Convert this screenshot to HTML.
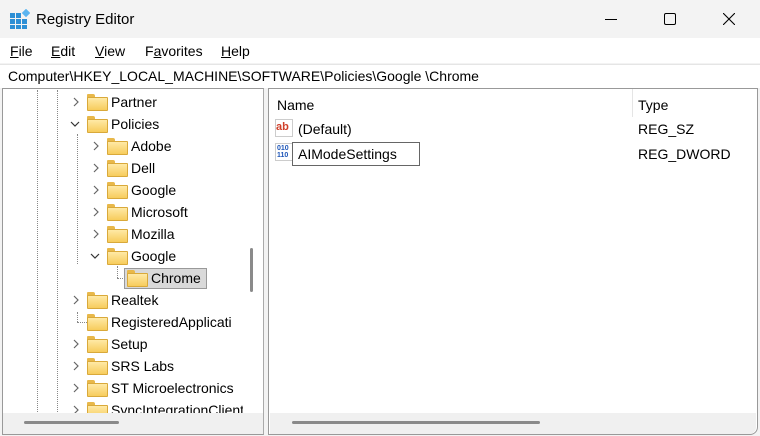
<!DOCTYPE html>
<html><head><style>
*{margin:0;padding:0;box-sizing:border-box}
body{width:760px;height:436px;overflow:hidden;background:#f3f3f3;font-family:"Liberation Sans",sans-serif;font-size:14px;color:#000;position:relative}
.a{position:absolute;white-space:nowrap}
.t{line-height:18px}
.fold{position:absolute;width:19px;height:15px;z-index:2}
.fold:before{content:"";position:absolute;left:0;top:0;width:8px;height:4px;background:#e8b84a;border-radius:1px 2px 0 0}
.fold:after{content:"";position:absolute;left:0;top:3px;width:19px;height:12px;background:linear-gradient(#ffe9a6,#f7cc5c);border:1px solid #d9a93a;border-radius:1px}
.dv{position:absolute;width:0;border-left:1px dotted #888}
.dh{position:absolute;height:0;border-top:1px dotted #888}
.chev{position:absolute;width:12px;height:12px}
</style></head><body>
<div class="a" style="left:0;top:0;width:760px;height:38px;background:#f3f3f3"></div>
<svg class="a" style="left:10px;top:9px" width="20" height="20" viewBox="0 0 20 20">
<g fill="#2d8fd5"><rect x="0" y="4" width="5" height="5"/><rect x="6" y="4" width="5" height="5"/><rect x="0" y="10" width="5" height="5"/><rect x="6" y="10" width="5" height="5"/><rect x="12" y="10" width="5" height="5"/><rect x="0" y="16" width="5" height="4"/><rect x="6" y="16" width="5" height="4"/><rect x="12" y="16" width="5" height="4"/></g>
<rect x="13" y="1" width="6" height="6" fill="#5ab4f0" transform="rotate(45 16 4)"/></svg>
<div class="a t" style="left:36px;top:11px;font-size:15px">Registry Editor</div>
<div class="a" style="left:605px;top:19px;width:12px;height:1px;background:#000"></div>
<div class="a" style="left:664px;top:13px;width:12px;height:12px;border:1px solid #000;border-radius:2px"></div>
<svg class="a" style="left:723px;top:13px" width="12" height="12"><path d="M0 0L12 12M12 0L0 12" stroke="#000" stroke-width="1.1"/></svg>
<div class="a" style="left:0;top:38px;width:760px;height:25px;background:#fff"></div>
<div class="a t" style="left:10px;top:42px"><u>F</u>ile</div>
<div class="a t" style="left:51px;top:42px"><u>E</u>dit</div>
<div class="a t" style="left:95px;top:42px"><u>V</u>iew</div>
<div class="a t" style="left:145px;top:42px">F<u>a</u>vorites</div>
<div class="a t" style="left:221px;top:42px"><u>H</u>elp</div>
<div class="a" style="left:0;top:64px;width:760px;height:24px;background:#fff;border-top:1px solid #e5e5e5"></div>
<div class="a t" style="left:8px;top:67px">Computer\HKEY_LOCAL_MACHINE\SOFTWARE\Policies\Google \Chrome</div>
<div class="a" style="left:2px;top:88px;width:262px;height:347px;background:#fff;border:1px solid #999;border-right:1px solid #aaa"></div>
<div class="dv" style="left:37px;top:90px;height:322px"></div>
<div class="dv" style="left:57px;top:90px;height:322px"></div>
<div class="dv" style="left:77px;top:134px;height:130px"></div>
<div class="dv" style="left:117px;top:266px;height:12px"></div>
<div class="dh" style="left:117px;top:278px;width:10px"></div>
<div class="dh" style="left:77px;top:322px;width:10px"></div>
<div class="dv" style="left:77px;top:312px;height:10px"></div>
<div class="a" style="left:124px;top:268px;width:83px;height:21px;background:#d9d9d9;border:1px solid #999"></div>
<div id="tree"></div>
<script>
var rows=[["Partner",0,">"],["Policies",0,"v"],["Adobe",1,">"],["Dell",1,">"],["Google",1,">"],["Microsoft",1,">"],["Mozilla",1,">"],["Google",1,"v"],["Chrome",2,""],["Realtek",0,">"],["RegisteredApplicati",0,""],["Setup",0,">"],["SRS Labs",0,">"],["ST Microelectronics",0,">"],["SyncIntegrationClient",0,">"]];
var h="";
rows.forEach(function(r,i){var y=93+i*22;var x=87+r[1]*20;
if(r[2]==">")h+='<svg class="chev" style="left:'+(x-17)+'px;top:'+(y+3)+'px"><path d="M4 2L8 6L4 10" fill="none" stroke="#666" stroke-width="1.2"/></svg>';
if(r[2]=="v")h+='<svg class="chev" style="left:'+(x-18)+'px;top:'+(y+3)+'px"><path d="M2 4L6 8L10 4" fill="none" stroke="#333" stroke-width="1.2"/></svg>';
h+='<div class="fold" style="left:'+x+'px;top:'+(y+1)+'px"></div>';
h+='<div class="a t" style="z-index:2;left:'+(x+24)+'px;top:'+y+'px">'+r[0]+'</div>';});
document.getElementById("tree").outerHTML=h;
</script>
<div class="a" style="z-index:5;left:243px;top:89px;width:20px;height:324px;background:#fff"></div>
<div class="a" style="z-index:6;left:250px;top:248px;width:3px;height:44px;background:#8a8a8a;border-radius:2px"></div>
<div class="a" style="z-index:5;left:3px;top:413px;width:260px;height:21px;background:#f0f0f0"></div>
<div class="a" style="z-index:6;left:24px;top:421px;width:95px;height:3px;background:#8a8a8a;border-radius:2px"></div>
<div class="a" style="left:268px;top:88px;width:490px;height:347px;background:#fff;border:1px solid #999;border-radius:0 0 8px 0"></div>
<div class="a t" style="left:277px;top:96px">Name</div>
<div class="a" style="left:632px;top:89px;width:1px;height:28px;background:#e5e5e5"></div>
<div class="a t" style="left:638px;top:96px">Type</div>
<div class="a" style="left:275px;top:119px;width:18px;height:18px;background:#fff;border:1px solid #ccc"></div>
<div class="a" style="left:276px;top:121px;font-size:11px;font-weight:bold;color:#d0402a">ab</div>
<div class="a t" style="left:298px;top:120px">(Default)</div>
<div class="a t" style="left:638px;top:120px">REG_SZ</div>
<div class="a" style="left:275px;top:143px;width:18px;height:18px;border:1px solid #ccc;background:#fff;font-size:7px;line-height:7px;color:#1d55b8;font-weight:bold;padding:1px">010<br>110</div>
<div class="a" style="left:292px;top:142px;width:128px;height:24px;background:#fff;border:1px solid #666"></div>
<div class="a t" style="left:298px;top:145px">AIModeSettings</div>
<div class="a t" style="left:638px;top:145px">REG_DWORD</div>
<div class="a" style="left:270px;top:413px;width:486px;height:21px;background:#f0f0f0;border-radius:0 0 7px 0"></div>
<div class="a" style="left:292px;top:421px;width:248px;height:3px;background:#8a8a8a;border-radius:2px"></div>
</body></html>
